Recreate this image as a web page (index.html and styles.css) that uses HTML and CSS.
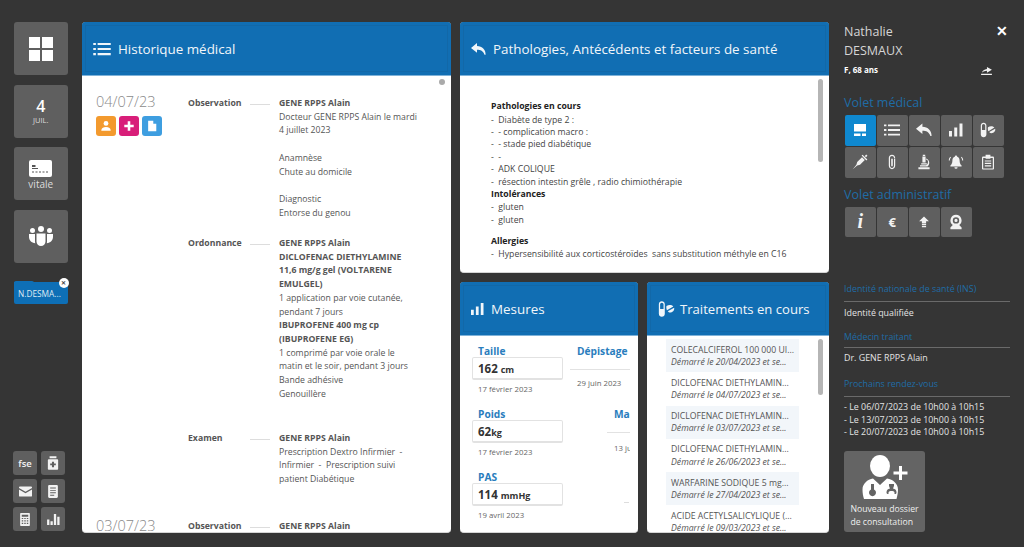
FILE: index.html
```html
<!DOCTYPE html>
<html lang="fr">
<head>
    <meta charset="UTF-8">
    <title>Dossier patient</title>
    <link rel="stylesheet" href="styles.css">
</head>
<body>

    <svg class="sprite" xmlns="http://www.w3.org/2000/svg">
        <symbol id="i-list" viewBox="0 0 20 16"><path d="M0 1h3v2.400H0zM0 6.800h3v2.400H0zM0 12.600h3V15H0zM5 1h15v2.400H5zM5 6.800h15v2.400H5zM5 12.600h15V15H5z"/></symbol>
        <symbol id="i-reply" viewBox="0 0 20 18"><path d="M8 1 0 7.500 8 14V10c5 0 8 1.500 10 6.500h1.500C19.500 9.500 15 5.500 8 5z"/></symbol>
        <symbol id="i-bars" viewBox="0 0 16 16"><path d="M0 9h3.400v6.500H0zM6 5h3.400v10.500H6zM12 .5h3.400v15H12z"/></symbol>
        <symbol id="i-pills" viewBox="0 0 20 20"><path fill-rule="evenodd" d="M4.500 1C2.500 1 1 2.500 1 4.500v11C1 17.500 2.500 19 4.500 19S8 17.500 8 15.500v-11C8 2.500 6.500 1 4.500 1zM2.500 10V4.500a2 2 0 0 1 4 0V10z"/><path d="M10 6.500c2.500-1.500 6-1.500 8 .5l-7.500 4.500C10 10 9.500 8 10 6.500zM11.500 12.500 19 8.500c.5 2-.5 4-2.500 5s-3.800.8-5-1z"/></symbol>
        <symbol id="i-syringe" viewBox="0 0 20 20"><path d="M1 19l5.500-4.500 3.500-1 6-6-3.500-3.500-6 6-1 3.500zM12 2l6 6 1.200-1.200-6-6zM16 2.500l1.500 1.500 1.800-1.800-1.500-1.500z"/></symbol>
        <symbol id="i-clip" viewBox="0 0 14 20"><path d="M7 1C4.500 1 3 2.800 3 5v9.500C3 17 4.700 19 7 19s4-2 4-4.500V5H9.500v9.500C9.500 16.200 8.500 17.500 7 17.500s-2.500-1.300-2.500-3V5c0-1.500 1-2.500 2.500-2.500S9.500 3.500 9.500 5v.5H11V5c0-2.200-1.500-4-4-4zM6 6v8c0 .8.300 1.500 1 1.500s1-.7 1-1.500V6H7z" fill-rule="evenodd"/></symbol>
        <symbol id="i-micro" viewBox="0 0 20 20"><path d="M8.500 1h3v1.500h-3zM8 3h4v7.500H8zM12.500 5.500c3 1 4.500 3.500 4 6.500-.2 1.500-1 2.800-2 3.500H5v-1.500h7.500c1.500-.8 2.500-2.200 2.500-4 0-1.500-1-2.800-2.500-3zM6.500 11.500h7V13h-7zM3 16.500h14V19H3z"/></symbol>
        <symbol id="i-bell" viewBox="0 0 20 20"><path d="M10 2c-.8 0-1.300.5-1.300 1.200C6.500 4 5.500 6 5.500 8c0 3-1 5-2.500 6.500v1h14v-1C15.500 13 14.500 11 14.500 8c0-2-1-4-3.200-4.800C11.300 2.500 10.800 2 10 2zM8 16.500a2 2 0 0 0 4 0zM1 8c0-2 .8-3.500 2-4.500l.8.8C2.900 5.200 2.300 6.500 2.300 8zM19 8c0-2-.8-3.500-2-4.500l-.8.8c.9.900 1.500 2.200 1.500 3.700z"/></symbol>
        <symbol id="i-clipboard" viewBox="0 0 18 20"><path fill-rule="evenodd" d="M6 1h6v2h3c.8 0 1.500.7 1.500 1.500V18c0 .8-.7 1.500-1.500 1.500H3c-.8 0-1.500-.7-1.500-1.500V4.500C1.500 3.700 2.200 3 3 3h3zM3 5v13h12V5h-3v1H6V5zM5 8h8v1.500H5zM5 11h8v1.500H5zM5 14h8v1.500H5z"/></symbol>
        <symbol id="i-up" viewBox="0 0 16 20"><path d="M8 2 1 9h4v3h6V9h4zM5 13h6v1.800H5zM5 15.800h6v1.800H5z"/></symbol>
        <symbol id="i-cam" viewBox="0 0 20 20"><path fill-rule="evenodd" d="M10 1a7 7 0 0 0-4 12.700L3 17v2h14v-2l-3-3.300A7 7 0 0 0 10 1zm0 3a4 4 0 1 1 0 8 4 4 0 0 1 0-8zm0 2a2 2 0 1 0 0 4 2 2 0 0 0 0-4z"/></symbol>
        <symbol id="i-user" viewBox="0 0 14 14"><circle cx="7" cy="4" r="2.800"/><path d="M1.500 12.500c0-3 2-4.300 5.500-4.300s5.500 1.300 5.500 4.300z"/></symbol>
        <symbol id="i-plus" viewBox="0 0 14 14"><path d="M5.500 1.500h3v4h4v3h-4v4h-3v-4h-4v-3h4z"/></symbol>
        <symbol id="i-file" viewBox="0 0 14 14"><path d="M2.500 1h6l3.500 3.500V13h-9.500zM8.500 1v3.500H12z"/></symbol>
    </svg>

    <div class="page">

        <nav class="side">
            <a class="tile">
                <svg class="ico-grid" viewBox="0 0 24 24"><path d="M0 0h11v11H0zM13 0h11v11H13zM0 13h11v11H0zM13 13h11v11H13z"/></svg>
            </a>
            <a class="tile tile-date"><b>4</b><span>JUIL.</span></a>
            <a class="tile tile-vitale">
                <svg class="ico-vitale" viewBox="0 0 23 17"><rect width="23" height="17" rx="2" fill="#fff"/><path d="M3 5h3.500v2H3zM3 8h6v1H3zM3 11.500h2v1H3zM6.500 11.500h2v1h-2zM10 11.500h2v1h-2zM13.500 11.500h2v1h-2zM17 11.500h2v1h-2z" fill="#555"/></svg>
                <span>vitale</span>
            </a>
            <a class="tile">
                <svg class="ico-team" viewBox="0 0 24 20"><circle cx="12" cy="3" r="3"/><circle cx="3.500" cy="4.500" r="2.500"/><circle cx="20.500" cy="4.500" r="2.500"/><path d="M7.500 7.500h9v8c0 2.500-2 4.500-4.500 4.500s-4.500-2-4.500-4.500zM0 8h6v7.500c0 .8.100 1.300.3 1.800C2.500 17 0 14 0 11zM24 8h-6v7.500c0 .8-.1 1.300-.3 1.800C21.500 17 24 14 24 11z"/></svg>
            </a>
            <div class="folder">
                <span class="folder-tab"></span>
                <span class="folder-name">N.DESMA...</span>
                <span class="folder-close">&#10005;</span>
            </div>

            <div class="tools">
                <a class="tool tool-txt">fse</a>
                <a class="tool"><svg class="s14" viewBox="0 0 14 16"><path d="M3 0h8v2.500H3zM2 3.500h10c.6 0 1 .4 1 1V15c0 .6-.4 1-1 1H2c-.6 0-1-.4-1-1V4.500c0-.6.4-1 1-1zM5.800 6.500v2.200H3.700v2h2.100v2.200h2.400v-2.200h2.100v-2H8.200V6.500z" fill-rule="evenodd"/></svg></a>
                <a class="tool"><svg class="s14w" viewBox="0 0 14 11"><path d="M0 1c0-.6.4-1 1-1h12c.6 0 1 .4 1 1v.8L7 5.800 0 1.800zM0 3.300 7 7.300l7-4V10c0 .6-.4 1-1 1H1c-.6 0-1-.4-1-1z"/></svg></a>
                <a class="tool"><svg class="s12" viewBox="0 0 12 16"><path fill-rule="evenodd" d="M1.500 0h9C11.300 0 12 .7 12 1.500v13c0 .8-.7 1.500-1.500 1.500h-9C.7 16 0 15.300 0 14.500v-13C0 .7.700 0 1.500 0zM2.500 3v1.200h7V3zM2.500 6v1.200h7V6zM2.500 9v1.200h7V9zM2.500 12v1.200h5V12z"/></svg></a>
                <a class="tool"><svg class="s12" viewBox="0 0 12 16"><path fill-rule="evenodd" d="M1 0h10c.6 0 1 .4 1 1v14c0 .6-.4 1-1 1H1c-.6 0-1-.4-1-1V1c0-.6.4-1 1-1zM2 2v2.500h8V2zM2 6v1.500h1.800V6zM5.100 6v1.500h1.800V6zM8.200 6v1.500H10V6zM2 9v1.500h1.800V9zM5.100 9v1.500h1.800V9zM8.200 9v1.500H10V9zM2 12v1.500h1.800V12zM5.100 12v1.500h1.800V12zM8.200 12v1.500H10V12z"/></svg></a>
                <a class="tool"><svg class="s14w" viewBox="0 0 14 12"><path d="M0 6h2.500v6H0zM3.700 8h2.500v4H3.700zM7.400 0h2.500v12H7.400zM11.100 3h2.500v9h-2.500z"/></svg></a>
            </div>
        </nav>

        <main class="cards">
            <section class="card card-hist">
                <header class="card-head">
                    <svg class="head-ico ico-list"><use href="#i-list"/></svg>
                    <h2>Historique médical</h2>
                </header>
                <div class="card-body hist-body">
                    <span class="scroll-dot"></span>

                    <div class="day">
                        <div class="day-left">
                            <div class="day-date">04/07/23</div>
                            <div class="day-flags">
                                <span class="flag flag-orange"><svg><use href="#i-user"/></svg></span>
                                <span class="flag flag-pink"><svg><use href="#i-plus"/></svg></span>
                                <span class="flag flag-blue"><svg><use href="#i-file"/></svg></span>
                            </div>
                        </div>
                        <div class="entries">
                            <div class="entry entry-obs">
                                <div class="entry-type">Observation</div>
                                <div class="entry-line"></div>
                                <div class="entry-txt">
                                    <strong>GENE RPPS Alain</strong>
                                    <p>Docteur GENE RPPS Alain le mardi<br>4 juillet 2023</p>
                                    <p class="gap">Anamnèse<br>Chute au domicile</p>
                                    <p class="gap">Diagnostic<br>Entorse du genou</p>
                                </div>
                            </div>
                            <div class="entry entry-ord">
                                <div class="entry-type">Ordonnance</div>
                                <div class="entry-line"></div>
                                <div class="entry-txt">
                                    <strong>GENE RPPS Alain</strong>
                                    <p><strong>DICLOFENAC DIETHYLAMINE<br>11,6 mg/g gel (VOLTARENE<br>EMULGEL)</strong></p>
                                    <p>1 application par voie cutanée,<br>pendant 7 jours</p>
                                    <p><strong>IBUPROFENE 400 mg cp<br>(IBUPROFENE EG)</strong></p>
                                    <p>1 comprimé par voie orale le<br>matin et le soir, pendant 3 jours<br>Bande adhésive<br>Genouillère</p>
                                </div>
                            </div>
                            <div class="entry entry-exa">
                                <div class="entry-type">Examen</div>
                                <div class="entry-line"></div>
                                <div class="entry-txt">
                                    <strong>GENE RPPS Alain</strong>
                                    <p>Prescription Dextro Infirmier &nbsp;-<br>Infirmier &nbsp;- &nbsp;Prescription suivi<br>patient Diabétique</p>
                                </div>
                            </div>
                        </div>
                    </div>

                    <div class="day day-next">
                        <div class="day-left"><div class="day-date">03/07/23</div></div>
                        <div class="entries">
                            <div class="entry">
                                <div class="entry-type">Observation</div>
                                <div class="entry-line"></div>
                                <div class="entry-txt"><strong>GENE RPPS Alain</strong></div>
                            </div>
                        </div>
                    </div>
                </div>
            </section>

            <section class="card card-path">
                <header class="card-head">
                    <svg class="head-ico ico-reply"><use href="#i-reply"/></svg>
                    <h2>Pathologies, Antécédents et facteurs de santé</h2>
                </header>
                <div class="card-body path-body">
                    <span class="scrollbar path-scroll"></span>
                    <h4>Pathologies en cours</h4>
                    <p>-&nbsp; Diabète de type 2 :</p>
                    <p>- &nbsp;- complication macro :</p>
                    <p>- &nbsp;- stade pied diabétique</p>
                    <p>- &nbsp;-</p>
                    <p>-&nbsp; ADK COLIQUE</p>
                    <p>-&nbsp; résection intestin grêle , radio chimiothérapie</p>
                    <h4>Intolérances</h4>
                    <p>-&nbsp; gluten</p>
                    <p>-&nbsp; gluten</p>
                    <h4 class="h-gap">Allergies</h4>
                    <p>-&nbsp; Hypersensibilité aux corticostéroïdes &nbsp;sans substitution méthyle en C16</p>
                </div>
            </section>

            <section class="card card-mes">
                <header class="card-head">
                    <svg class="head-ico ico-bars"><use href="#i-bars"/></svg>
                    <h2>Mesures</h2>
                </header>
                <div class="card-body mes-body">
                    <div class="mes-col">
                        <div class="mes">
                            <h5>Taille</h5>
                            <div class="mes-box"><b>162</b> <span>cm</span></div>
                            <small>17 février 2023</small>
                        </div>
                        <div class="mes">
                            <h5>Poids</h5>
                            <div class="mes-box"><b>62</b><span>kg</span></div>
                            <small>17 février 2023</small>
                        </div>
                        <div class="mes">
                            <h5>PAS</h5>
                            <div class="mes-box"><b>114</b> <span>mmHg</span></div>
                            <small>19 avril 2023</small>
                        </div>
                    </div>
                    <div class="mes-col2">
                        <div class="mes2">
                            <h5>Dépistage</h5>
                            <div class="mes2-line"></div>
                            <small>29 juin 2023</small>
                        </div>
                        <div class="mes2 mes2-b">
                            <h5>Ma</h5>
                            <div class="mes2-line"></div>
                            <small>13 ju</small>
                        </div>
                        <div class="mes2-dash"></div>
                    </div>
                </div>
            </section>

            <section class="card card-trt">
                <header class="card-head">
                    <svg class="head-ico ico-pills"><use href="#i-pills"/></svg>
                    <h2>Traitements en cours</h2>
                </header>
                <div class="card-body trt-body">
                    <span class="scrollbar trt-scroll"></span>
                    <div class="trt alt"><p>COLECALCIFEROL 100 000 UI...</p><em>Démarré le 20/04/2023 et se...</em></div>
                    <div class="trt"><p>DICLOFENAC DIETHYLAMIN...</p><em>Démarré le 04/07/2023 et se...</em></div>
                    <div class="trt alt"><p>DICLOFENAC DIETHYLAMIN...</p><em>Démarré le 03/07/2023 et se...</em></div>
                    <div class="trt"><p>DICLOFENAC DIETHYLAMIN...</p><em>Démarré le 26/06/2023 et se...</em></div>
                    <div class="trt alt"><p>WARFARINE SODIQUE 5 mg...</p><em>Démarré le 27/04/2023 et se...</em></div>
                    <div class="trt"><p>ACIDE ACETYLSALICYLIQUE (...</p><em>Démarré le 09/03/2023 et se...</em></div>
                </div>
            </section>
        </main>

        <aside class="info">
            <div class="patient">
                <div class="patient-name">Nathalie<br>DESMAUX</div>
                <span class="patient-close">&#10005;</span>
            </div>
            <div class="patient-age">
                <b>F, 68 ans</b>
                <svg class="ico-edit" viewBox="0 0 14 10"><path d="M1 8.500h12V10H1zM2 7.500c.5-2.500 2.500-4 5.500-4.300V1l5.500 3.300-5.500 3.200V5.300C5.500 5.400 3.700 6 2 7.500z"/></svg>
            </div>

            <h3 class="volet">Volet médical</h3>
            <div class="btns">
                <a class="btn btn-on"><svg class="b12" viewBox="0 0 12 12"><path d="M0 0h12v7.500H0zM0 9.500h6.500V12H0zM8 9.500h4V12H8z"/></svg></a>
                <a class="btn"><svg class="b16"><use href="#i-list"/></svg></a>
                <a class="btn"><svg class="b16"><use href="#i-reply"/></svg></a>
                <a class="btn"><svg class="b14"><use href="#i-bars"/></svg></a>
                <a class="btn"><svg class="b16"><use href="#i-pills"/></svg></a>
                <a class="btn"><svg class="b16"><use href="#i-syringe"/></svg></a>
                <a class="btn"><svg class="b16"><use href="#i-clip"/></svg></a>
                <a class="btn"><svg class="b16"><use href="#i-micro"/></svg></a>
                <a class="btn"><svg class="b16"><use href="#i-bell"/></svg></a>
                <a class="btn"><svg class="b16"><use href="#i-clipboard"/></svg></a>
            </div>

            <h3 class="volet volet-b">Volet administratif</h3>
            <div class="btns">
                <a class="btn btn-i">i</a>
                <a class="btn btn-eur">€</a>
                <a class="btn"><svg class="b14"><use href="#i-up"/></svg></a>
                <a class="btn"><svg class="b16"><use href="#i-cam"/></svg></a>
            </div>

            <h6 class="info-title t-ins">Identité nationale de santé (INS)</h6>
            <p class="info-txt">Identité qualifiée</p>
            <h6 class="info-title t-med">Médecin traitant</h6>
            <p class="info-txt">Dr. GENE RPPS Alain</p>
            <h6 class="info-title t-rdv">Prochains rendez-vous</h6>
            <ul class="rdv">
                <li>- Le 06/07/2023 de 10h00 à 10h15</li>
                <li>- Le 13/07/2023 de 10h00 à 10h15</li>
                <li>- Le 20/07/2023 de 10h00 à 10h15</li>
            </ul>

            <a class="new-file">
                <svg class="ico-doc" viewBox="0 0 46 44">
                    <ellipse cx="18" cy="11" rx="10" ry="11"/>
                    <path fill-rule="evenodd" d="M11 23.500 18 30l7-6.500c6 1 11 5 11 11 0 3-.5 5.500-1.500 9.500H2C1 41 .5 38 .5 34.500c0-6 5-10 10.500-11zM9 29v5.500a3.500 3.500 0 1 0 3 0V29zM27 29c-.3 2 .5 3.300 1 4.500a4 4 0 0 0-3.500 4 1.500 1.500 0 0 0 2 1.500v-1.500c0-1.500 2-1.500 3-1.500s3 0 3 1.500V39c1 .3 2-.3 2-1.500a4 4 0 0 0-3.500-4c.5-1.200 1.300-2.500 1-4.500z"/>
                    <path d="M37 11h3v5.500h5.500v3H40V25h-3v-5.500h-5.500v-3H37z"/>
                </svg>
                <span>Nouveau dossier<br>de consultation</span>
            </a>
        </aside>

    </div>

</body>
</html>
```

FILE: styles.css
```css
* {
    padding: 0;
    margin: 0;
    box-sizing: border-box;
    list-style: none;
}
body {
    background-color: #353535;
    font-family: "Open Sans", "Liberation Sans", sans-serif;
    color: #555;
    overflow: hidden;
}
.sprite {
    display: none;
}
svg {
    fill: currentColor;
    display: block;
}
.page {
    display: flex;
    height: 547px;
    padding: 22px 0 14px 14px;
}

/* colonne de gauche */
.side {
    width: 68px;
    flex: none;
    display: flex;
    flex-direction: column;
    color: #fff;
}
.tile {
    width: 53.500px;
    height: 53px;
    margin-bottom: 9.500px;
    background-color: #5f5f5f;
    border-radius: 3px;
    display: flex;
    flex-direction: column;
    align-items: center;
    justify-content: center;
}
.ico-grid {
    width: 24px;
    height: 24px;
}
.tile-date b {
    font-size: 16px;
    line-height: 18px;
    font-weight: 600;
}
.tile-date span {
    font-size: 7.500px;
    line-height: 10px;
    color: #ddd;
}
.ico-vitale {
    width: 23px;
    height: 17px;
    margin-top: 5px;
}
.tile-vitale span {
    font-size: 10px;
    line-height: 15px;
    color: #ddd;
}
.ico-team {
    width: 24px;
    height: 20px;
}
.folder {
    position: relative;
    width: 53.500px;
    height: 22px;
    margin-top: 9.500px;
    background-color: #0e6fb6;
    border-radius: 0 0 2px 2px;
}
.folder-tab {
    position: absolute;
    left: 0;
    top: -1px;
    width: 20px;
    height: 3px;
    background-color: #0e6fb6;
    border-radius: 2px 2px 0 0;
}
.folder-name {
    display: block;
    padding: 5px 0 0 4px;
    font-size: 8.300px;
    line-height: 13px;
    color: #dfeaf3;
}
.folder-close {
    position: absolute;
    right: -1px;
    top: -4px;
    width: 10px;
    height: 10px;
    background-color: #fff;
    border-radius: 50%;
    color: #444;
    font-size: 6px;
    line-height: 10px;
    text-align: center;
    font-weight: 700;
}
.tools {
    margin-top: auto;
    margin-left: -1px;
    margin-bottom: 2px;
    display: grid;
    grid-template-columns: 24px 24px;
    grid-auto-rows: 24px;
    gap: 4px;
}
.tool {
    background-color: #5f5f5f;
    border-radius: 3px;
    display: flex;
    align-items: center;
    justify-content: center;
    color: #f2f2f2;
}
.tool-txt {
    font-size: 9.500px;
    font-weight: 600;
}
.s14 {
    width: 12px;
    height: 14px;
}
.s12 {
    width: 10px;
    height: 13px;
}
.s14w {
    width: 13px;
    height: 11px;
}

/* cartes */
.cards {
    width: 747px;
    flex: none;
    display: grid;
    grid-template-columns: 369px 178px 182px;
    grid-template-rows: 251px 251px;
    gap: 9px;
}
.card {
    background-color: #fff;
    border-radius: 4px;
    border-bottom: 1px solid #d5d5d5;
    overflow: hidden;
    display: flex;
    flex-direction: column;
    position: relative;
}
.card-hist {
    grid-row: 1 / 3;
    grid-column: 1;
}
.card-path {
    grid-column: 2 / 4;
    grid-row: 1;
}
.card-mes {
    grid-column: 2;
    grid-row: 2;
}
.card-trt {
    grid-column: 3;
    grid-row: 2;
}
.card-head {
    height: 53px;
    flex: none;
    background-color: #116eb3;
    border: 3px solid #116eb3;
    box-shadow: inset 0 0 0 1px #1268a8;
    color: #f1f6fa;
    display: flex;
    align-items: center;
    padding-left: 8px;
}
.card-head h2 {
    font-size: 13.400px;
    font-weight: 400;
    white-space: nowrap;
}
.head-ico {
    flex: none;
    margin-right: 7px;
}
.ico-list {
    width: 18px;
    height: 14px;
}
.ico-reply {
    width: 15px;
    height: 14px;
}
.ico-bars {
    width: 13px;
    height: 14px;
    margin-right: 7px;
}
.ico-pills {
    width: 17px;
    height: 18px;
    margin-right: 5px;
}
.card-trt h2 {
    font-size: 13.100px;
}
.card-body {
    flex: 1;
    min-height: 0;
    border-top: 1px solid #7fb2d8;
    overflow: hidden;
    position: relative;
}

/* historique */
.hist-body {
    font-size: 8.700px;
    line-height: 13.700px;
    color: #555;
}
.scroll-dot {
    position: absolute;
    right: 6px;
    top: 3px;
    width: 6px;
    height: 6px;
    background-color: #aaa;
    border-radius: 50%;
}
.day {
    display: flex;
    padding-left: 14px;
}
.day-left {
    width: 92px;
    flex: none;
    padding-top: 16px;
}
.day-date {
    font-size: 14.500px;
    line-height: 20px;
    color: #8a8a8a;
    font-weight: 300;
}
.day-flags {
    display: flex;
    gap: 3px;
    margin-top: 4px;
}
.flag {
    width: 20px;
    height: 20px;
    border-radius: 3px;
    color: #fff;
    display: flex;
    align-items: center;
    justify-content: center;
}
.flag svg {
    width: 12px;
    height: 12px;
}
.flag-orange {
    background-color: #f39a2e;
}
.flag-pink {
    background-color: #d81e79;
}
.flag-blue {
    background-color: #3e9ee0;
}
.entries {
    flex: 1;
    padding-top: 21px;
}
.entry {
    display: flex;
}
.entry-type {
    width: 62px;
    flex: none;
    font-weight: 700;
    color: #555;
}
.entry-line {
    width: 20px;
    height: 1px;
    margin: 7px 9px 0 0;
    background-color: #ddd;
    flex: none;
}
.entry-txt {
    width: 142px;
    flex: none;
}
.entry-txt strong {
    font-weight: 700;
}
.gap {
    margin-top: 13.700px;
}
.entry-ord {
    margin-top: 16.700px;
}
.entry-exa {
    margin-top: 30.600px;
}
.day-next {
    margin-top: 29px;
}
.day-next .day-left {
    padding-top: 0;
}
.day-next .entries {
    padding-top: 4px;
}

/* pathologies */
.path-body {
    padding: 24px 0 0 31px;
    font-size: 8.700px;
    line-height: 12.400px;
    color: #444;
}
.path-body h4 {
    font-size: 8.700px;
    font-weight: 700;
    color: #222;
    line-height: 13.500px;
}
.h-gap {
    margin-top: 8.500px;
}
.scrollbar {
    position: absolute;
    width: 5px;
    background-color: #b5b5b5;
    border-radius: 3px;
}
.path-scroll {
    right: 6px;
    top: 3px;
    height: 83px;
}
.trt-scroll {
    right: 6px;
    top: 3px;
    height: 56px;
}

/* mesures */
.mes-body {
    display: flex;
    padding: 9px 0 0 12px;
}
.mes-col {
    width: 91px;
    flex: none;
}
.mes {
    height: 63px;
}
.mes h5,
.mes2 h5 {
    font-size: 10.200px;
    line-height: 12px;
    font-weight: 700;
    color: #2a7dbd;
    padding-left: 6px;
}
.mes-box {
    width: 91px;
    height: 23px;
    border: 1px solid #e2e2e2;
    border-bottom-width: 2px;
    border-radius: 2px;
    padding-left: 5px;
    font-size: 11.500px;
    line-height: 21px;
    color: #333;
    white-space: nowrap;
}
.mes-box b {
    font-weight: 700;
}
.mes-box span {
    font-size: 9px;
    font-weight: 700;
}
.mes small,
.mes2 small {
    display: block;
    font-size: 7.800px;
    line-height: 12px;
    margin-top: 3px;
    padding-left: 6px;
    color: #666;
}
.mes-col2 {
    flex: 1;
    min-width: 0;
    margin-left: 7px;
    margin-right: 8px;
    overflow: hidden;
    position: relative;
}
.mes2 {
    height: 63px;
    white-space: nowrap;
}
.mes2-line {
    height: 1px;
    margin-top: 12px;
    background-color: #e2e2e2;
}
.mes2 small {
    margin-top: 7px;
    padding-left: 7px;
}
.mes2 h5 {
    padding-left: 7px;
}
.mes2-b {
    padding-left: 37px;
}
.mes2-b small {
    margin-top: 9px;
}
.mes2-dash {
    margin: 0 0 0 54px;
    width: 5px;
    height: 1px;
    background-color: #ddd;
    position: relative;
    top: 31px;
}

/* traitements */
.trt-body {
    padding: 3px 0 0 19px;
    font-size: 8.700px;
    line-height: 12.300px;
    color: #555;
}
.trt {
    width: 133px;
    height: 33.300px;
    padding: 4.500px 0 0 5px;
    white-space: nowrap;
    overflow: hidden;
}
.alt {
    background-color: #f2f6fa;
}
.trt em {
    display: block;
}

/* colonne de droite */
.info {
    width: 166px;
    flex: none;
    margin-left: 15px;
    color: #e4e4e4;
}
.patient {
    display: flex;
    justify-content: space-between;
}
.patient-name {
    font-size: 12.500px;
    line-height: 18.500px;
    color: #d5d5d5;
    margin-top: 1px;
}
.patient-close {
    color: #fff;
    font-size: 14px;
    line-height: 16px;
    font-weight: 700;
    padding-right: 2px;
    margin-top: 1px;
}
.patient-age {
    display: flex;
    justify-content: space-between;
    align-items: center;
    font-size: 8px;
    line-height: 12px;
    color: #fff;
    margin-top: 4px;
    padding-right: 17px;
}
.ico-edit {
    width: 13px;
    height: 9px;
    color: #f2f2f2;
}
.volet {
    font-size: 12.500px;
    line-height: 18px;
    font-weight: 400;
    color: #1f6ca5;
    margin-top: 18px;
}
.volet-b {
    margin-top: 8px;
}
.btns {
    display: grid;
    grid-template-columns: repeat(5, 30.500px);
    grid-auto-rows: 30.500px;
    gap: 1.500px;
    margin-top: 3px;
    margin-left: 1px;
}
.btn {
    background-color: #5f5f5f;
    border-radius: 2px;
    color: #f2f2f2;
    display: flex;
    align-items: center;
    justify-content: center;
}
.btn-on {
    background-color: #0f88cf;
    color: #fff;
}
.b16 {
    width: 16px;
    height: 16px;
}
.b14 {
    width: 14px;
    height: 14px;
}
.b12 {
    width: 12px;
    height: 12px;
}
.btn-i {
    font-family: "Liberation Serif", serif;
    font-style: italic;
    font-weight: 700;
    font-size: 20px;
}
.btn-eur {
    font-size: 13px;
    font-weight: 700;
}
.info-title {
    font-size: 8.900px;
    line-height: 13px;
    font-weight: 400;
    color: #1f6ca5;
    border-bottom: 1px solid #6a6a6a;
    padding-bottom: 5px;
}
.t-ins {
    margin-top: 45px;
    padding-bottom: 6px;
}
.t-med {
    margin-top: 11px;
    padding-bottom: 4px;
}
.t-rdv {
    margin-top: 13px;
    padding-bottom: 5.500px;
}
.info-txt {
    font-size: 8.900px;
    line-height: 13px;
    margin-top: 3.500px;
}
.rdv {
    font-size: 8.900px;
    line-height: 12.700px;
    margin-top: 4.500px;
}
.new-file {
    display: flex;
    flex-direction: column;
    align-items: center;
    width: 81px;
    height: 81px;
    margin-top: 12px;
    background-color: #646464;
    border-radius: 3px;
    color: #fff;
    padding-top: 4px;
}
.ico-doc {
    width: 46px;
    height: 44px;
}
.new-file span {
    font-size: 8.700px;
    line-height: 12.500px;
    margin-top: 4px;
    color: #eee;
    text-align: left;
}
```
